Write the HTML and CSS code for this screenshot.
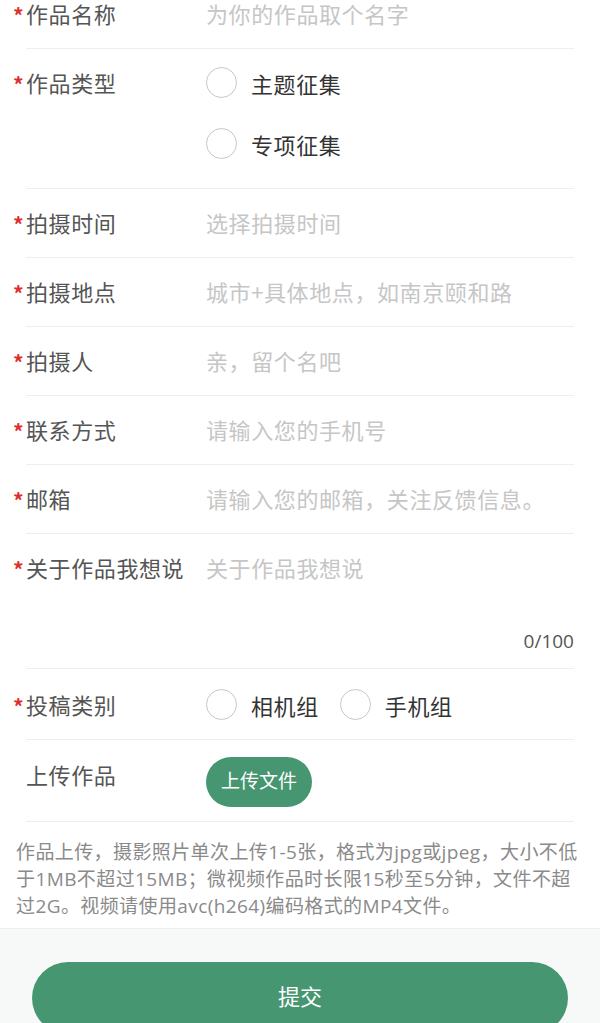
FILE: index.html
```html
<!DOCTYPE html>
<html lang="zh-CN">
<head>
  <meta charset="UTF-8">
  <meta name="viewport" content="width=device-width, initial-scale=1.0">
  <title>作品投稿</title>
  <link rel="stylesheet" href="styles.css">
</head>
<body>
  <form class="form">
    <div class="row">
      <label class="label required">作品名称</label>
      <input class="field" type="text" placeholder="为你的作品取个名字">
    </div>

    <div class="row row-type">
      <label class="label required">作品类型</label>
      <div class="radio-list">
        <label class="radio"><span class="circle"></span>主题征集</label>
        <label class="radio"><span class="circle"></span>专项征集</label>
      </div>
    </div>

    <div class="row">
      <label class="label required">拍摄时间</label>
      <input class="field" type="text" placeholder="选择拍摄时间">
    </div>

    <div class="row">
      <label class="label required">拍摄地点</label>
      <input class="field" type="text" placeholder="城市+具体地点，如南京颐和路">
    </div>

    <div class="row">
      <label class="label required">拍摄人</label>
      <input class="field" type="text" placeholder="亲，留个名吧">
    </div>

    <div class="row">
      <label class="label required">联系方式</label>
      <input class="field" type="text" placeholder="请输入您的手机号">
    </div>

    <div class="row">
      <label class="label required">邮箱</label>
      <input class="field" type="text" placeholder="请输入您的邮箱，关注反馈信息。">
    </div>

    <div class="row row-text">
      <label class="label required">关于作品我想说</label>
      <div class="text-box">
        <textarea class="field area" placeholder="关于作品我想说"></textarea>
        <div class="counter">0/100</div>
      </div>
    </div>

    <div class="row row-group">
      <label class="label required">投稿类别</label>
      <div class="radio-inline">
        <label class="radio"><span class="circle"></span>相机组</label>
        <label class="radio"><span class="circle"></span>手机组</label>
      </div>
    </div>

    <div class="row row-upload">
      <label class="label">上传作品</label>
      <button type="button" class="upload-btn">上传文件</button>
    </div>

    <p class="note">作品上传，摄影照片单次上传1-5张，格式为jpg或jpeg，大小不低于1MB不超过15MB；微视频作品时长限15秒至5分钟，文件不超过2G。视频请使用avc(h264)编码格式的MP4文件。</p>
  </form>

  <div class="footer">
    <button type="button" class="submit-btn">提交</button>
  </div>
</body>
</html>
```

FILE: styles.css
```css
* {
  margin: 0;
  padding: 0;
  box-sizing: border-box;
}

body {
  font-family: "Noto Sans CJK SC", "Noto Sans", sans-serif;
  background: #fff;
  color: #333;
  overflow: hidden;
}

.form {
  margin-top: -20px;
}

.row {
  display: flex;
  align-items: flex-start;
  margin: 0 26px;
  padding: 18px 0 20px;
  border-bottom: 1px solid #eeeeee;
}

.label {
  position: relative;
  flex: 0 0 180px;
  font-size: 22px;
  line-height: 30px;
  color: #555;
  letter-spacing: 0.6px;
}

.label.required::before {
  content: "*";
  position: absolute;
  left: -13px;
  top: 2px;
  color: #e02e2e;
  font-size: 21px;
  font-weight: bold;
}

.field {
  flex: 1;
  border: none;
  outline: none;
  background: transparent;
  font-family: inherit;
  font-size: 22px;
  line-height: 30px;
  height: 30px;
  color: #333;
  letter-spacing: 0.6px;
}

.field::placeholder {
  color: #c6c6c6;
}

.row-type {
  padding: 18px 0 29px;
}

.radio-list {
  display: flex;
  flex-direction: column;
  gap: 30px;
}

.radio {
  display: flex;
  align-items: center;
  gap: 14px;
  font-size: 22px;
  line-height: 30px;
  color: #333;
  letter-spacing: 0.6px;
}

.circle {
  width: 31px;
  height: 31px;
  border: 1.5px solid #c8c8c8;
  border-radius: 50%;
}

.row-text {
  padding: 18px 0 12px;
}

.text-box {
  flex: 1;
  display: flex;
  flex-direction: column;
}

.area {
  flex: none;
  resize: none;
  height: 74px;
}

.counter {
  text-align: right;
  font-family: "Open Sans", "Noto Sans CJK SC", sans-serif;
  font-size: 19px;
  line-height: 30px;
  color: #555;
}

.row-group {
  padding: 20px 0 19px;
}

.radio-inline {
  display: flex;
  gap: 21px;
}

.row-upload {
  padding: 0 0 14px;
}

.row-upload .label {
  padding-top: 19px;
}

.upload-btn {
  margin-top: 17px;
  height: 50px;
  padding: 0 15px 5px;
  border: none;
  border-radius: 25px;
  background: #479672;
  color: #fff;
  font-family: inherit;
  font-size: 19px;
  line-height: 1;
}

.note {
  padding: 17px 16px 8px;
  font-family: "Open Sans", "Noto Sans CJK SC", sans-serif;
  font-size: 19px;
  line-height: 27px;
  color: #8a8a8a;
  letter-spacing: 0.4px;
}

.footer {
  border-top: 1px solid #eeeeee;
  background: #f7f8f8;
  padding: 33px 32px 40px;
}

.submit-btn {
  display: block;
  width: 100%;
  height: 72px;
  padding-bottom: 6px;
  border: none;
  border-radius: 36px;
  background: #479672;
  color: #fff;
  font-family: inherit;
  font-size: 22px;
  line-height: 1;
}
```
